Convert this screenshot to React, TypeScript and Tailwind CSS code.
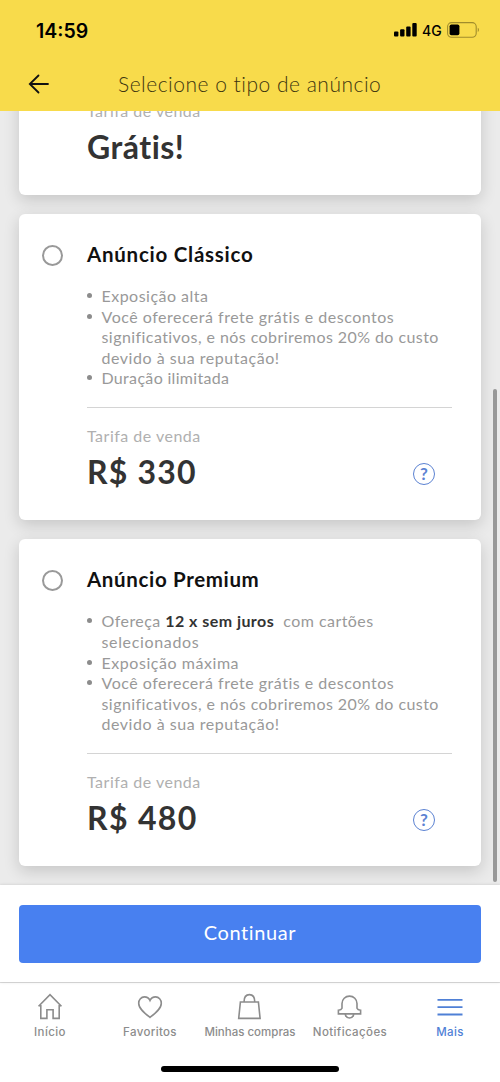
import React from 'react'
import clsx from 'clsx'

interface Line {
  content: React.ReactNode
  tracking: string
}

interface Listing {
  title?: string
  titleTracking?: string
  bullets: Line[][]
  price: string
  priceTracking: string
  help: boolean
}

const SHIPPING: Line[] = [
  { content: 'Você oferecerá frete grátis e descontos', tracking: 'tracking-[0.5px]' },
  { content: 'significativos, e nós cobriremos 20% do custo', tracking: 'tracking-[0.43px]' },
  { content: 'devido à sua reputação!', tracking: 'tracking-[0.53px]' },
]

const LISTINGS: Listing[] = [
  {
    bullets: [],
    price: 'Grátis!',
    priceTracking: 'tracking-[0.5px]',
    help: false,
  },
  {
    title: 'Anúncio Clássico',
    titleTracking: 'tracking-[0.75px]',
    bullets: [
      [{ content: 'Exposição alta', tracking: 'tracking-[0.48px]' }],
      SHIPPING,
      [{ content: 'Duração ilimitada', tracking: 'tracking-[0.32px]' }],
    ],
    price: 'R$ 330',
    priceTracking: 'tracking-[1.2px]',
    help: true,
  },
  {
    title: 'Anúncio Premium',
    titleTracking: 'tracking-[0.65px]',
    bullets: [
      [
        {
          content: (
            <>
              Ofereça <b className="font-bold text-[#333]">12 x sem juros</b>&nbsp; com cartões
            </>
          ),
          tracking: 'tracking-[0.45px]',
        },
        { content: 'selecionados', tracking: 'tracking-[0.65px]' },
      ],
      [{ content: 'Exposição máxima', tracking: 'tracking-[0.55px]' }],
      SHIPPING,
    ],
    price: 'R$ 480',
    priceTracking: 'tracking-[1.35px]',
    help: true,
  },
]

const TABS = [
  { label: 'Início', tracking: 'tracking-[0.4px]', icon: <HomeIcon /> },
  { label: 'Favoritos', tracking: 'tracking-[0.35px]', icon: <HeartIcon /> },
  { label: 'Minhas compras', tracking: 'tracking-[0px]', icon: <BagIcon /> },
  { label: 'Notificações', tracking: 'tracking-[0.4px]', icon: <BellIcon /> },
  { label: 'Mais', tracking: 'tracking-[0.3px]', icon: <MenuIcon />, active: true },
]

export default function App(): React.ReactElement {
  return (
    <div className="flex flex-col w-[500px] h-[1082px] overflow-hidden bg-white font-['Lato',sans-serif]">
      <Header />

      <main className="relative flex flex-col justify-end gap-[19.5px] h-[774px] px-[19px] pb-[19px] overflow-hidden bg-[#ebebeb]">
        {LISTINGS.map((l) => (
          <ListingCard key={l.price} listing={l} />
        ))}
        <div className="absolute right-[3.5px] bottom-[3.5px] w-1 h-[493px] rounded-full bg-[#989898]" />
      </main>

      <div className="relative h-[97px] px-[19px] pt-[19.5px] bg-white shadow-[0_0_3px_rgba(0,0,0,0.15)]">
        <button className="flex items-center justify-center w-full h-[58px] pb-[3px] rounded-[4px] bg-[#4880f0] text-[20px] leading-6 tracking-[0.6px] text-white">
          Continuar
        </button>
      </div>

      <TabBar />
    </div>
  )
}

function Header(): React.ReactElement {
  return (
    <header className="h-[111px] shrink-0 bg-[#f8db4b]">
      <div className="flex items-center justify-between h-[60px] pl-9 pr-5 font-['Inter',sans-serif] text-black">
        <span className="pt-0.5 text-[19.5px] leading-6 font-semibold">14:59</span>
        <div className="flex items-center">
          <svg width="23" height="14" viewBox="0 0 23 14">
            <rect x="0" y="8.5" width="4.4" height="5" rx="1" />
            <rect x="6.1" y="6.2" width="4.4" height="7.3" rx="1" />
            <rect x="12.2" y="3.4" width="4.4" height="10.1" rx="1" />
            <rect x="18.3" y="0" width="4.4" height="13.5" rx="1" />
          </svg>
          <span className="ml-[5px] w-5 pt-px text-[14px] leading-4 font-medium">4G</span>
          <svg className="ml-[5px]" width="33" height="16" viewBox="0 0 33 16" fill="none">
            <rect x="0.6" y="0.6" width="28.6" height="14.6" rx="4" stroke="#a08c2c" strokeWidth="1.1" />
            <rect x="2.6" y="2.5" width="9.8" height="10.8" rx="1.8" fill="#000" />
            <path d="M30.8 5.8c1.3.6 1.3 3.6 0 4.2z" fill="#8d7a22" />
          </svg>
        </div>
      </div>
      <div className="flex items-center h-12 pl-7">
        <svg width="22" height="20" viewBox="0 0 22 20" fill="none" stroke="#111" strokeWidth="1.8" strokeLinecap="round">
          <path d="M10.5 1.5 1.8 10l8.7 8.5M2 10h18" />
        </svg>
        <h1 className="ml-[68px] whitespace-nowrap text-[21px] leading-6 font-light tracking-[0.5px] text-[#3d350f]">
          Selecione o tipo de anúncio
        </h1>
      </div>
    </header>
  )
}

function ListingCard({ listing }: { listing: Listing }): React.ReactElement {
  return (
    <section className="flex shrink-0 pl-[23px] pr-[29px] pt-7 pb-[29.7px] rounded-md bg-white shadow-[0_5px_16px_rgba(0,0,0,0.16)]">
      <div className="w-[45px] shrink-0 pt-[2.5px]">
        {listing.title && <div className="size-[21px] rounded-full border-2 border-[#999]" />}
      </div>
      <div className="flex-1 min-w-0">
        {listing.title && (
          <h2 className={clsx('text-[20.5px] leading-6 font-bold text-[#111]', listing.titleTracking)}>
            {listing.title}
          </h2>
        )}
        {listing.bullets.length > 0 && (
          <ul className="mt-5 pb-[18px] border-b border-[#d4d4d4] text-[16px] leading-[20.6px] text-[#999]">
            {listing.bullets.map((lines, i) => (
              <li key={i} className="flex">
                <span className="w-[14.5px] shrink-0 pt-[7px]">
                  <span className="block size-[5px] rounded-full bg-[#8c8c8c]" />
                </span>
                <span>
                  {lines.map((line, j) => (
                    <span key={j} className={clsx('block whitespace-nowrap', line.tracking)}>
                      {line.content}
                    </span>
                  ))}
                </span>
              </li>
            ))}
          </ul>
        )}
        <div className="flex items-end justify-between pt-[18px]">
          <div>
            <p className="text-[16px] leading-5 tracking-[0.5px] text-[#b0b0b0]">Tarifa de venda</p>
            <p className={clsx('mt-[8.3px] text-[32px] leading-9 font-bold text-[#333]', listing.priceTracking)}>
              {listing.price}
            </p>
          </div>
          {listing.help && <HelpIcon />}
        </div>
      </div>
    </section>
  )
}

function HelpIcon(): React.ReactElement {
  return (
    <span className="flex items-center justify-center mr-[17px] mb-[5.5px] size-[22px] rounded-full border-[1.5px] border-[#5b82d2] text-[17px] leading-none font-bold text-[#5b82d2]">
      ?
    </span>
  )
}

function TabBar(): React.ReactElement {
  return (
    <nav className="flex flex-col items-center h-[100px] border-t border-[#dedede] bg-white">
      <div className="grid grid-cols-5 w-full pt-[10px]">
        {TABS.map((t) => (
          <div
            key={t.label}
            className={clsx('flex flex-col items-center', t.active ? 'text-[#4f80d6]' : 'text-[#8c8c8c]')}
          >
            {t.icon}
            <span
              className={clsx(
                "mt-[3px] whitespace-nowrap font-['Inter',sans-serif] text-[11.5px] leading-4 font-medium",
                t.tracking,
              )}
            >
              {t.label}
            </span>
          </div>
        ))}
      </div>
      <div className="mt-[26px] w-[178px] h-1.5 rounded-full bg-black" />
    </nav>
  )
}

function Icon({ children }: { children: React.ReactNode }): React.ReactElement {
  return (
    <svg width="28" height="28" viewBox="0 0 28 28" fill="none" stroke="currentColor" strokeWidth="1.6">
      {children}
    </svg>
  )
}

function HomeIcon(): React.ReactElement {
  return (
    <Icon>
      <path d="M2.6 13.2 14 1.6l11.4 11.6M2.4 12.7h2.4v12.7h6.1V16.8h6.2v8.6h6.1V12.7h2.4" />
    </Icon>
  )
}

function HeartIcon(): React.ReactElement {
  return (
    <Icon>
      <path d="M14 24.4C9 20.5 2.7 15.8 2.7 10.2c0-3.6 2.5-6.3 5.7-6.3 2.5 0 4.5 1.2 5.6 3.6 1.1-2.4 3.1-3.6 5.6-3.6 3.2 0 5.7 2.7 5.7 6.3 0 5.6-6.3 10.3-11.3 14.2z" />
    </Icon>
  )
}

function BagIcon(): React.ReactElement {
  return (
    <Icon>
      <path d="M4.4 9h18l1.7 16.4H2.7zM8 9c0-5 2.3-7.4 5.4-7.4S18.8 4 18.8 9" />
    </Icon>
  )
}

function BellIcon(): React.ReactElement {
  return (
    <Icon>
      <path d="M6 15.2v-4.6a7.5 7.5 0 0 1 15 0v4.6c.5 1.2 1.8 1.8 3.6 2.1v3.6H2.4v-3.6c1.8-.3 3.1-.9 3.6-2.1zM9.1 21c.6 2.6 2.2 4 4.4 4s3.8-1.4 4.4-4" />
    </Icon>
  )
}

function MenuIcon(): React.ReactElement {
  return (
    <Icon>
      <path strokeWidth="1.8" d="M1.5 6.9h25M1.5 14.2h25M1.5 21.5h25" />
    </Icon>
  )
}
